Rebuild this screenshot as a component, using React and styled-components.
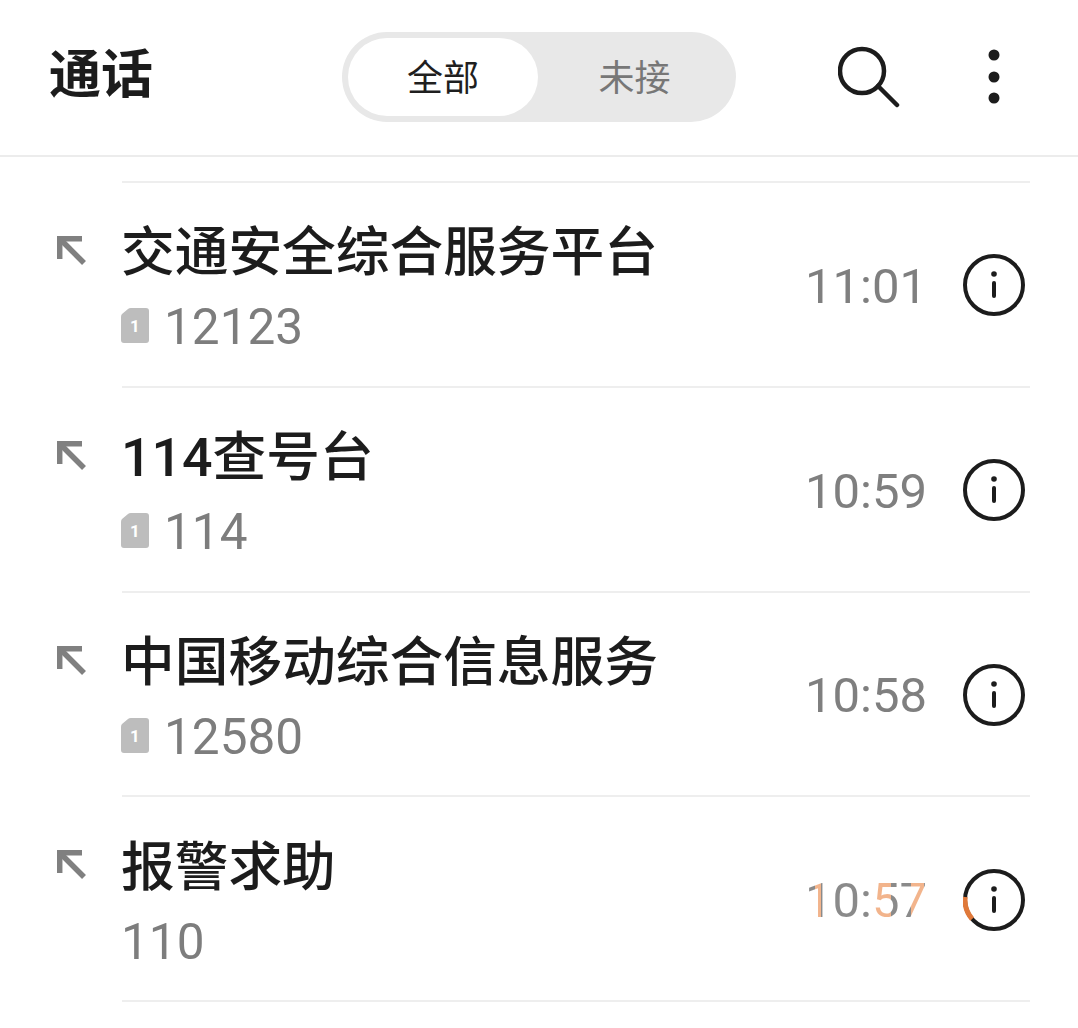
import React from 'react';
import styled, { createGlobalStyle } from 'styled-components';

const GlobalStyle = createGlobalStyle`
  html, body {
    margin: 0;
    background: #fff;
    font-family: Roboto, "Noto Sans CJK SC", sans-serif;
  }
`;

const Page = styled.div`
  width: 1078px;
  height: 1028px;
  overflow: hidden;
  background: #fff;
`;

const Header = styled.header`
  box-sizing: border-box;
  height: 157px;
  padding: 32px 78px 0 49px;
  display: flex;
  align-items: flex-start;
  border-bottom: 2px solid #ececec;
`;

const Title = styled.h1`
  margin: 13px 0 0;
  width: 293px;
  font-size: 52px;
  line-height: 62px;
  font-weight: 700;
  color: #1c1c1c;
`;

const Toggle = styled.div`
  box-sizing: border-box;
  width: 394px;
  height: 90px;
  padding: 6px;
  display: flex;
  border-radius: 45px;
  background: #e8e8e8;
`;

const ToggleItem = styled.div`
  box-sizing: border-box;
  width: 190px;
  height: 78px;
  padding: 0 0 5px ${props => (props.$active ? '0' : '3px')};
  display: flex;
  align-items: center;
  justify-content: center;
  border-radius: 39px;
  font-size: 36px;
  color: ${props => (props.$active ? '#1f1f1f' : '#777')};
  background: ${props => (props.$active ? '#fff' : 'transparent')};
`;

const HeaderIcons = styled.div`
  margin-left: auto;
  display: flex;
  align-items: center;
  gap: 88px;
  height: 90px;
`;

const List = styled.ul`
  list-style: none;
  margin: 0;
  padding: 24px 48px 0 0;
`;

const Row = styled.li`
  height: 204.75px;
  display: flex;
  align-items: center;
`;

const ArrowCell = styled.div`
  width: 122px;
  height: 100%;
  box-sizing: border-box;
  padding: 55px 0 0 57px;
  flex-shrink: 0;
`;

const RowBody = styled.div`
  flex: 1;
  height: 100%;
  box-sizing: border-box;
  padding-top: 2px;
  display: flex;
  align-items: center;
  border-top: 2px solid #eeeeee;
  li:last-child & {
    box-shadow: 0 2px 0 #eeeeee;
  }
`;

const Texts = styled.div`
  flex: 1;
  min-width: 0;
  margin-left: -1px;
  padding-top: 7px;
`;

const Name = styled.div`
  font-size: 53.7px;
  line-height: 64px;
  font-weight: 500;
  color: #1c1c1c;
`;

const NumberLine = styled.div`
  display: flex;
  align-items: center;
  gap: 15px;
  margin-top: 13px;
  font-size: 49.5px;
  line-height: 58px;
  color: #7d7d7d;
`;

const SimSlot = styled.div`
  display: flex;
  margin-top: -3px;
`;

const SimDigit = styled.text`
  font-family: Roboto, sans-serif;
  font-size: 17px;
  font-weight: 700;
  fill: #fff;
`;

const Time = styled.div`
  width: 158px;
  margin-top: 2px;
  font-size: 49px;
  color: #7f7f7f;
  ${props => props.$tinted && `
    background: linear-gradient(90deg, #8a8a8a 0 10px, #f2b48c 10px 16px, #8a8a8a 16px 69px, #f2b48c 69px 86px, #8a8a8a 86px 106px, #f2b48c 106px 119px, #8a8a8a 119px);
    -webkit-background-clip: text;
    background-clip: text;
    color: transparent;
  `}
`;

const InfoSlot = styled.div`
  display: flex;
  margin-right: 5px;
`;

const SearchIcon = () => (
  <svg width="62" height="62" viewBox="0 0 62 62" fill="none" stroke="#1c1c1c" strokeWidth="4.5" strokeLinecap="round">
    <circle cx="24" cy="25" r="22" />
    <path d="M40 40 L59 59" />
  </svg>
);

const MoreIcon = () => (
  <svg width="12" height="56" viewBox="0 0 12 56" fill="#1c1c1c">
    <circle cx="6" cy="6" r="5.5" />
    <circle cx="6" cy="28" r="5.5" />
    <circle cx="6" cy="49" r="5.5" />
  </svg>
);

const OutgoingIcon = () => (
  <svg width="30" height="30" viewBox="0 0 30 30" fill="none" stroke="#808080" strokeWidth="5.5">
    <path d="M2.7 23 V2.7 H25" />
    <path d="M3 3 L27 27" />
  </svg>
);

const SimIcon = () => (
  <svg width="28" height="35" viewBox="0 0 28 35">
    <path d="M7 1 Q8 0 10 0 H25 Q28 0 28 3 V32 Q28 35 25 35 H3 Q0 35 0 32 V9 Q0 7 1 6 Z" fill="#bdbdbd" />
    <SimDigit x="14" y="24" textAnchor="middle">1</SimDigit>
  </svg>
);

const InfoIcon = ({ tinted }) => (
  <svg width="62" height="62" viewBox="0 0 62 62" fill="none" stroke="#1c1c1c" strokeWidth="4" strokeLinecap="round">
    <circle cx="31" cy="31" r="29" />
    {tinted && <path d="M2.2 28 A29 29 0 0 0 9.1 50" stroke="#e0793a" strokeWidth="5" strokeLinecap="butt" />}
    <circle cx="31" cy="20" r="2.8" fill="#1c1c1c" stroke="none" />
    <path d="M31 29 V42" />
  </svg>
);

const calls = [
  { name: '交通安全综合服务平台', number: '12123', time: '11:01', sim: true },
  { name: '114查号台', number: '114', time: '10:59', sim: true },
  { name: '中国移动综合信息服务', number: '12580', time: '10:58', sim: true },
  { name: '报警求助', number: '110', time: '10:57', tinted: true },
];

export default function App() {
  return (
    <Page>
      <GlobalStyle />
      <Header>
        <Title>通话</Title>
        <Toggle>
          <ToggleItem $active>全部</ToggleItem>
          <ToggleItem>未接</ToggleItem>
        </Toggle>
        <HeaderIcons>
          <SearchIcon />
          <MoreIcon />
        </HeaderIcons>
      </Header>
      <List>
        {calls.map(call => (
          <Row key={call.number}>
            <ArrowCell>
              <OutgoingIcon />
            </ArrowCell>
            <RowBody>
              <Texts>
                <Name>{call.name}</Name>
                <NumberLine>
                  {call.sim && (
                    <SimSlot>
                      <SimIcon />
                    </SimSlot>
                  )}
                  <span>{call.number}</span>
                </NumberLine>
              </Texts>
              <Time $tinted={call.tinted}>{call.time}</Time>
              <InfoSlot>
                <InfoIcon tinted={call.tinted} />
              </InfoSlot>
            </RowBody>
          </Row>
        ))}
      </List>
    </Page>
  );
}
